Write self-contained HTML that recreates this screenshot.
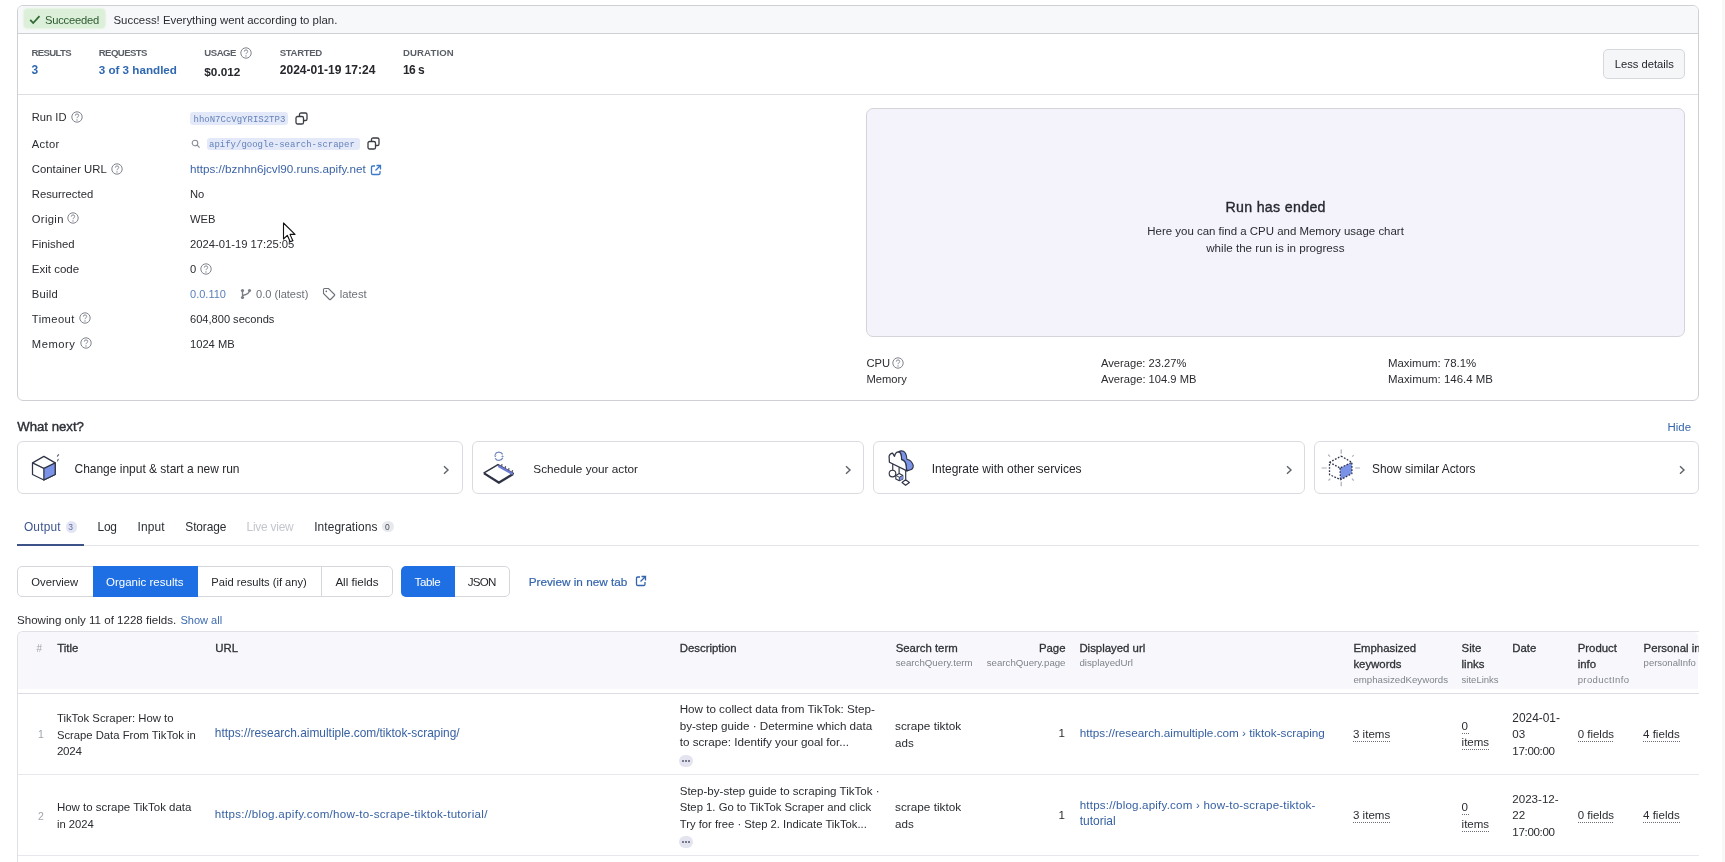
<!DOCTYPE html>
<html><head><meta charset="utf-8"><style>
html,body{margin:0;padding:0;background:#fff;width:1725px;height:862px;overflow:hidden;position:relative;font-family:'Liberation Sans', sans-serif;}
.t{position:absolute;white-space:pre;}
.r{position:absolute;}
</style></head><body><div id="w" style="position:absolute;left:0;top:0;width:1725px;height:862px;will-change:transform;">
<div class="r" style="left:1722px;top:0px;width:3px;height:862px;background:#f8f8f8;"></div>
<div class="r" style="left:17px;top:5px;width:1682px;height:396px;box-sizing:border-box;border:1px solid #cfd0d4;border-radius:6px;background:#fff;"></div>
<div class="r" style="left:18px;top:6px;width:1680px;height:27px;background:#f7f8f9;border-radius:5px 5px 0 0;"></div>
<div class="r" style="left:18px;top:33px;width:1680px;height:1px;background:#cfd0d4;"></div>
<div class="r" style="left:18px;top:94px;width:1680px;height:1px;background:#dcdee2;"></div>
<div class="r" style="left:24px;top:9px;width:81px;height:19px;background:#dcefd8;border-radius:4px;box-shadow:0 0 1.5px 0.5px #e4f3e1;"></div>
<svg class="r" style="left:29px;top:15px;" width="12" height="10" viewBox="0 0 12 10"><path d="M1.2 4.8 L4.2 8 L10.5 1.2" fill="none" stroke="#2f6a35" stroke-width="1.8"/></svg>
<div class="t" style="left:45.00px;top:11.50px;font-size:11.20px;line-height:16px;color:#2d5a33;letter-spacing:-0.227px;">Succeeded</div>
<div class="t" style="left:113.50px;top:11.50px;font-size:11.42px;line-height:16px;color:#2a2c31;">Success! Everything went according to plan.</div>
<div class="t" style="left:31.50px;top:46.20px;font-size:9.60px;line-height:13px;color:#5b5f67;font-weight:700;letter-spacing:-0.67px;">RESULTS</div>
<div class="t" style="left:98.70px;top:46.20px;font-size:9.60px;line-height:13px;color:#5b5f67;font-weight:700;letter-spacing:-0.564px;">REQUESTS</div>
<div class="t" style="left:204.30px;top:46.20px;font-size:9.60px;line-height:13px;color:#5b5f67;font-weight:700;letter-spacing:-0.488px;">USAGE</div>
<div class="t" style="left:279.80px;top:46.20px;font-size:9.60px;line-height:13px;color:#5b5f67;font-weight:700;letter-spacing:-0.374px;">STARTED</div>
<div class="t" style="left:403.00px;top:46.20px;font-size:9.60px;line-height:13px;color:#5b5f67;font-weight:700;letter-spacing:0.106px;">DURATION</div>
<svg class="r" style="left:238.7px;top:46.3px;" width="14" height="14" viewBox="0 0 14 14"><circle cx="7" cy="7" r="5.2" fill="none" stroke="#80848c" stroke-width="1"/><path d="M5.3 5.6 Q5.3 3.9 7 3.9 Q8.7 3.9 8.7 5.5 Q8.7 6.5 7.6 7 Q7 7.3 7 8.2" fill="none" stroke="#80848c" stroke-width="0.95"/><circle cx="7" cy="10" r="0.65" fill="#80848c"/></svg>
<div class="t" style="left:31.50px;top:61.70px;font-size:12.00px;line-height:17px;color:#2f67b0;font-weight:700;">3</div>
<div class="t" style="left:98.70px;top:61.70px;font-size:11.65px;line-height:16px;color:#2f67b0;font-weight:700;">3 of 3 handled</div>
<div class="t" style="left:204.30px;top:64.00px;font-size:11.77px;line-height:16px;color:#25272c;font-weight:700;">$0.012</div>
<div class="t" style="left:279.80px;top:62.00px;font-size:12.04px;line-height:17px;color:#25272c;font-weight:700;">2024-01-19 17:24</div>
<div class="t" style="left:403.00px;top:62.00px;font-size:12.00px;line-height:17px;color:#25272c;font-weight:700;letter-spacing:-0.589px;">16 s</div>
<div class="r" style="left:1603px;top:49px;width:82px;height:30px;box-sizing:border-box;border:1px solid #d6d8de;border-radius:5px;background:#f5f6f8;"></div>
<div class="t" style="left:1614.70px;top:55.80px;font-size:11.21px;line-height:16px;color:#25272c;">Less details</div>
<div class="t" style="left:31.80px;top:108.80px;font-size:11.15px;line-height:16px;color:#2a2c31;">Run ID</div>
<svg class="r" style="left:69.5px;top:109.5px;" width="14" height="14" viewBox="0 0 14 14"><circle cx="7" cy="7" r="5.2" fill="none" stroke="#80848c" stroke-width="1"/><path d="M5.3 5.6 Q5.3 3.9 7 3.9 Q8.7 3.9 8.7 5.5 Q8.7 6.5 7.6 7 Q7 7.3 7 8.2" fill="none" stroke="#80848c" stroke-width="0.95"/><circle cx="7" cy="10" r="0.65" fill="#80848c"/></svg>
<div class="t" style="left:31.80px;top:136.00px;font-size:11.20px;line-height:16px;color:#2a2c31;letter-spacing:0.312px;">Actor</div>
<div class="t" style="left:31.80px;top:161.00px;font-size:11.34px;line-height:16px;color:#2a2c31;">Container URL</div>
<svg class="r" style="left:109.5px;top:161.7px;" width="14" height="14" viewBox="0 0 14 14"><circle cx="7" cy="7" r="5.2" fill="none" stroke="#80848c" stroke-width="1"/><path d="M5.3 5.6 Q5.3 3.9 7 3.9 Q8.7 3.9 8.7 5.5 Q8.7 6.5 7.6 7 Q7 7.3 7 8.2" fill="none" stroke="#80848c" stroke-width="0.95"/><circle cx="7" cy="10" r="0.65" fill="#80848c"/></svg>
<div class="t" style="left:31.80px;top:185.70px;font-size:11.27px;line-height:16px;color:#2a2c31;">Resurrected</div>
<div class="t" style="left:31.80px;top:210.60px;font-size:11.20px;line-height:16px;color:#2a2c31;letter-spacing:0.354px;">Origin</div>
<svg class="r" style="left:66.3px;top:211.29999999999998px;" width="14" height="14" viewBox="0 0 14 14"><circle cx="7" cy="7" r="5.2" fill="none" stroke="#80848c" stroke-width="1"/><path d="M5.3 5.6 Q5.3 3.9 7 3.9 Q8.7 3.9 8.7 5.5 Q8.7 6.5 7.6 7 Q7 7.3 7 8.2" fill="none" stroke="#80848c" stroke-width="0.95"/><circle cx="7" cy="10" r="0.65" fill="#80848c"/></svg>
<div class="t" style="left:31.80px;top:235.60px;font-size:11.32px;line-height:16px;color:#2a2c31;">Finished</div>
<div class="t" style="left:31.80px;top:260.60px;font-size:11.52px;line-height:16px;color:#2a2c31;">Exit code</div>
<div class="t" style="left:31.80px;top:285.60px;font-size:11.20px;line-height:16px;color:#2a2c31;letter-spacing:0.239px;">Build</div>
<div class="t" style="left:31.80px;top:310.60px;font-size:11.20px;line-height:16px;color:#2a2c31;letter-spacing:0.422px;">Timeout</div>
<svg class="r" style="left:77.5px;top:311.3px;" width="14" height="14" viewBox="0 0 14 14"><circle cx="7" cy="7" r="5.2" fill="none" stroke="#80848c" stroke-width="1"/><path d="M5.3 5.6 Q5.3 3.9 7 3.9 Q8.7 3.9 8.7 5.5 Q8.7 6.5 7.6 7 Q7 7.3 7 8.2" fill="none" stroke="#80848c" stroke-width="0.95"/><circle cx="7" cy="10" r="0.65" fill="#80848c"/></svg>
<div class="t" style="left:31.80px;top:335.60px;font-size:11.20px;line-height:16px;color:#2a2c31;letter-spacing:0.525px;">Memory</div>
<svg class="r" style="left:78.5px;top:336.3px;" width="14" height="14" viewBox="0 0 14 14"><circle cx="7" cy="7" r="5.2" fill="none" stroke="#80848c" stroke-width="1"/><path d="M5.3 5.6 Q5.3 3.9 7 3.9 Q8.7 3.9 8.7 5.5 Q8.7 6.5 7.6 7 Q7 7.3 7 8.2" fill="none" stroke="#80848c" stroke-width="0.95"/><circle cx="7" cy="10" r="0.65" fill="#80848c"/></svg>
<div class="r" style="left:190px;top:112px;width:98px;height:13px;background:#e3e9f8;border-radius:3px;"></div>
<div class="t" style="left:193.50px;top:113.50px;font-size:9.00px;line-height:13px;color:#6482ba;font-family:'Liberation Mono', monospace;">hhoN7CcVgYRIS2TP3</div>
<svg class="r" style="left:294.5px;top:112px;" width="13" height="13" viewBox="0 0 13 13"><rect x="1" y="4.5" width="7.5" height="7.5" rx="1.6" fill="none" stroke="#3a3d44" stroke-width="1.3"/><path d="M4.5 4.2 V2.6 Q4.5 1 6.1 1 H10.4 Q12 1 12 2.6 V6.9 Q12 8.5 10.4 8.5 H8.8" fill="none" stroke="#3a3d44" stroke-width="1.3"/></svg>
<svg class="r" style="left:191px;top:139px;" width="10" height="10" viewBox="0 0 10 10"><circle cx="4" cy="4" r="2.8" fill="none" stroke="#8a8d94" stroke-width="1.1"/><path d="M6.2 6.2 L8.6 8.6" stroke="#8a8d94" stroke-width="1.2"/></svg>
<div class="r" style="left:207px;top:137.5px;width:153px;height:12px;background:#e3e9f8;border-radius:3px;"></div>
<div class="t" style="left:209.00px;top:138.50px;font-size:9.00px;line-height:13px;color:#6482ba;font-family:'Liberation Mono', monospace;">apify/google-search-scraper</div>
<svg class="r" style="left:366.5px;top:137px;" width="13" height="13" viewBox="0 0 13 13"><rect x="1" y="4.5" width="7.5" height="7.5" rx="1.6" fill="none" stroke="#3a3d44" stroke-width="1.3"/><path d="M4.5 4.2 V2.6 Q4.5 1 6.1 1 H10.4 Q12 1 12 2.6 V6.9 Q12 8.5 10.4 8.5 H8.8" fill="none" stroke="#3a3d44" stroke-width="1.3"/></svg>
<div class="t" style="left:190.00px;top:160.70px;font-size:11.70px;line-height:16px;color:#3d64a6;">https://bznhn6jcvl90.runs.apify.net</div>
<svg class="r" style="left:370px;top:163.5px;" width="12" height="12" viewBox="0 0 12 12"><path d="M5 2 H2.8 Q1.5 2 1.5 3.3 V9.2 Q1.5 10.5 2.8 10.5 H8.7 Q10 10.5 10 9.2 V7" fill="none" stroke="#3a78c9" stroke-width="1.3"/><path d="M6.5 1.5 H10.5 V5.5 M10.5 1.5 L5.5 6.5" fill="none" stroke="#3a78c9" stroke-width="1.3"/></svg>
<div class="t" style="left:190.00px;top:186.00px;font-size:11.20px;line-height:16px;color:#2a2c31;">No</div>
<div class="t" style="left:190.00px;top:210.50px;font-size:11.20px;line-height:16px;color:#2a2c31;">WEB</div>
<div class="t" style="left:190.00px;top:236.30px;font-size:11.24px;line-height:16px;color:#2a2c31;">2024-01-19 17:25:05</div>
<div class="t" style="left:190.00px;top:261.30px;font-size:11.20px;line-height:16px;color:#2a2c31;">0</div>
<svg class="r" style="left:198.5px;top:261.8px;" width="14" height="14" viewBox="0 0 14 14"><circle cx="7" cy="7" r="5.2" fill="none" stroke="#80848c" stroke-width="1"/><path d="M5.3 5.6 Q5.3 3.9 7 3.9 Q8.7 3.9 8.7 5.5 Q8.7 6.5 7.6 7 Q7 7.3 7 8.2" fill="none" stroke="#80848c" stroke-width="0.95"/><circle cx="7" cy="10" r="0.65" fill="#80848c"/></svg>
<div class="t" style="left:190.00px;top:287.30px;font-size:11.04px;line-height:15px;color:#5a7fb8;">0.0.110</div>
<svg class="r" style="left:240px;top:288px;" width="12" height="12" viewBox="0 0 12 12"><circle cx="2.5" cy="2.5" r="1.6" fill="#7a7e86"/><circle cx="2.5" cy="9.5" r="1.6" fill="#7a7e86"/><circle cx="9.5" cy="2.5" r="1.6" fill="#7a7e86"/><path d="M2.5 2.5 V9.5 M9.5 2.5 Q9.5 6 2.5 7.5" fill="none" stroke="#7a7e86" stroke-width="1.3"/></svg>
<div class="t" style="left:256.00px;top:286.30px;font-size:11.09px;line-height:16px;color:#6c7078;">0.0 (latest)</div>
<svg class="r" style="left:322px;top:287px;" width="14" height="14" viewBox="0 0 14 14"><path d="M1.5 2.6 Q1.5 1.5 2.6 1.5 H6.5 L12.5 7.5 Q13 8 12.5 8.5 L8.5 12.5 Q8 13 7.5 12.5 L1.5 6.5 Z" fill="none" stroke="#6c7078" stroke-width="1.1"/><circle cx="4.3" cy="4.3" r="0.9" fill="#6c7078"/></svg>
<div class="t" style="left:339.70px;top:286.30px;font-size:11.30px;line-height:16px;color:#6c7078;">latest</div>
<div class="t" style="left:190.00px;top:311.30px;font-size:11.08px;line-height:16px;color:#2a2c31;">604,800 seconds</div>
<div class="t" style="left:190.00px;top:336.30px;font-size:11.17px;line-height:16px;color:#2a2c31;">1024 MB</div>
<svg class="r" style="left:282px;top:222px;" width="14" height="22" viewBox="0 0 14 22"><path d="M1.5 1 V17 L5.3 13.3 L8.2 19.8 L10.8 18.7 L8 12.4 L13 12.4 Z" fill="#fff" stroke="#111" stroke-width="1.1" stroke-linejoin="round"/></svg>
<div class="r" style="left:866px;top:108px;width:819px;height:229px;box-sizing:border-box;border:1px solid #d4d4d9;border-radius:7px;background:#f4f3fc;"></div>
<div class="t" style="left:1225.40px;top:197.00px;font-size:14.20px;line-height:20px;color:#26292f;letter-spacing:0.321px;-webkit-text-stroke:0.35px #26292f;">Run has ended</div>
<div class="t" style="left:1147.30px;top:222.50px;font-size:11.46px;line-height:16px;color:#2a2c31;">Here you can find a CPU and Memory usage chart</div>
<div class="t" style="left:1206.20px;top:239.50px;font-size:11.64px;line-height:16px;color:#2a2c31;">while the run is in progress</div>
<div class="t" style="left:866.50px;top:355.20px;font-size:11.20px;line-height:16px;color:#2a2c31;">CPU</div>
<svg class="r" style="left:890.5px;top:355.5px;" width="14" height="14" viewBox="0 0 14 14"><circle cx="7" cy="7" r="5.2" fill="none" stroke="#80848c" stroke-width="1"/><path d="M5.3 5.6 Q5.3 3.9 7 3.9 Q8.7 3.9 8.7 5.5 Q8.7 6.5 7.6 7 Q7 7.3 7 8.2" fill="none" stroke="#80848c" stroke-width="0.95"/><circle cx="7" cy="10" r="0.65" fill="#80848c"/></svg>
<div class="t" style="left:866.50px;top:371.20px;font-size:11.20px;line-height:16px;color:#2a2c31;">Memory</div>
<div class="t" style="left:1101.00px;top:355.20px;font-size:11.16px;line-height:16px;color:#2a2c31;">Average: 23.27%</div>
<div class="t" style="left:1101.00px;top:371.20px;font-size:11.18px;line-height:16px;color:#2a2c31;">Average: 104.9 MB</div>
<div class="t" style="left:1388.00px;top:355.20px;font-size:11.43px;line-height:16px;color:#2a2c31;">Maximum: 78.1%</div>
<div class="t" style="left:1388.00px;top:371.20px;font-size:11.45px;line-height:16px;color:#2a2c31;">Maximum: 146.4 MB</div>
<div class="t" style="left:17.20px;top:418.00px;font-size:13.19px;line-height:18px;color:#2c2f35;-webkit-text-stroke:0.4px #2c2f35;">What next?</div>
<div class="t" style="left:1667.50px;top:418.80px;font-size:11.43px;line-height:16px;color:#3465ad;">Hide</div>
<div class="r" style="left:17px;top:441px;width:446px;height:53px;box-sizing:border-box;border:1px solid #d9dbe1;border-radius:6px;background:#fff;"></div>
<div class="r" style="left:472px;top:441px;width:392px;height:53px;box-sizing:border-box;border:1px solid #d9dbe1;border-radius:6px;background:#fff;"></div>
<div class="r" style="left:873px;top:441px;width:432px;height:53px;box-sizing:border-box;border:1px solid #d9dbe1;border-radius:6px;background:#fff;"></div>
<div class="r" style="left:1314px;top:441px;width:385px;height:53px;box-sizing:border-box;border:1px solid #d9dbe1;border-radius:6px;background:#fff;"></div>
<svg class="r" style="left:442px;top:465px;" width="8" height="10" viewBox="0 0 8 10"><path d="M2 1.2 L6 5 L2 8.8" fill="none" stroke="#5d6168" stroke-width="1.4"/></svg>
<svg class="r" style="left:844px;top:465px;" width="8" height="10" viewBox="0 0 8 10"><path d="M2 1.2 L6 5 L2 8.8" fill="none" stroke="#5d6168" stroke-width="1.4"/></svg>
<svg class="r" style="left:1284.5px;top:465px;" width="8" height="10" viewBox="0 0 8 10"><path d="M2 1.2 L6 5 L2 8.8" fill="none" stroke="#5d6168" stroke-width="1.4"/></svg>
<svg class="r" style="left:1677.5px;top:465px;" width="8" height="10" viewBox="0 0 8 10"><path d="M2 1.2 L6 5 L2 8.8" fill="none" stroke="#5d6168" stroke-width="1.4"/></svg>
<div class="t" style="left:74.50px;top:461.00px;font-size:11.97px;line-height:17px;color:#25272c;">Change input &amp; start a new run</div>
<div class="t" style="left:533.30px;top:460.80px;font-size:11.77px;line-height:16px;color:#25272c;">Schedule your actor</div>
<div class="t" style="left:931.70px;top:461.00px;font-size:11.99px;line-height:17px;color:#25272c;">Integrate with other services</div>
<div class="t" style="left:1372.00px;top:461.00px;font-size:11.85px;line-height:17px;color:#25272c;">Show similar Actors</div>
<svg class="r" style="left:26px;top:448px;" width="40" height="40" viewBox="0 0 40 40"><path d="M17.87 8.35 L29.2 14.85 L29.2 26.45 L17.87 32 L6.5 26.45 L6.5 14.85 Z" fill="#fff" stroke="#2f3346" stroke-width="1.25" stroke-linejoin="round"/><path d="M17.87 20.4 L29.2 14.85 L29.2 26.45 L17.87 32 Z" fill="#7b93e6" stroke="#2f3346" stroke-width="1.25" stroke-linejoin="round"/><path d="M6.5 14.85 L17.87 20.4" fill="none" stroke="#2f3346" stroke-width="1.25"/><path d="M32.6 6.6 L31.4 8.2 M32.2 11.3 L31.6 12.9" stroke="#5a5f70" stroke-width="1.1" stroke-linecap="round"/></svg>
<svg class="r" style="left:478px;top:446px;" width="40" height="40" viewBox="0 0 40 40"><path d="M6 26.9 L20 18.6 L35.3 27.4 L20.9 36.2 Z" fill="#fff" stroke="#2f3346" stroke-width="1.5" stroke-linejoin="round"/><path d="M6 27.6 L20.9 37.1 L35.3 28.3" fill="none" stroke="#2f3346" stroke-width="1.7" stroke-linejoin="round"/><path d="M20.3 19.9 L34.8 28" stroke="#6d7bd6" stroke-width="2.3"/><path d="M23.5 19.6 L24.2 18.4 M27 21.6 L27.7 20.4 M30.5 23.6 L31.2 22.4 M34 25.6 L34.7 24.4" stroke="#2f3346" stroke-width="1.2"/><path d="M17 8.7 A4.2 4.2 0 0 1 24.6 8.4" fill="none" stroke="#7386c0" stroke-width="1.3"/><path d="M24.8 11.8 A4.2 4.2 0 0 1 17.2 12.2" fill="none" stroke="#7386c0" stroke-width="1.3"/><path d="M15.8 9.6 L17.4 11.3 L18.6 9.4 Z M26 10.8 L24.4 9.2 L23.2 11.1 Z" fill="#6a7fc0"/></svg>
<svg class="r" style="left:882px;top:446px;" width="40" height="44" viewBox="0 0 40 44"><path d="M16.5 5.8 Q19 4.2 21.5 5.3 Q24.5 7 24.9 13.3 Q29.5 14.3 31.2 19.2 Q31.6 22.8 28.5 23.8 L24.9 24.9 Q24.3 22.5 24.1 19.6 Q23.5 14.5 19.6 13.6 Q19.5 6 16.5 5.8 Z" fill="#7b93e6" stroke="#2f3346" stroke-width="1.1" stroke-linejoin="round"/><path d="M7.4 16.2 L7.1 10.1 Q8 7.3 10.6 7.2 L12.5 10.3 Q13.5 5.8 16.5 5.8 Q19.5 6 19.6 13.6 Q23.5 14.5 24.1 19.6 Q24.3 22.5 24.9 24.9 Z" fill="#fff" stroke="#2f3346" stroke-width="1.25" stroke-linejoin="round"/><path d="M10.75 18 V24.2 M17.1 21.6 V27.6 M23.7 24.6 V33.8" stroke="#2f3346" stroke-width="1.15"/><circle cx="10.5" cy="27.5" r="3.3" fill="#fff" stroke="#2f3346" stroke-width="1.15"/><path d="M13.8 29.4 L17.3 27.6 L20.8 29.4 L20.8 32.9 L17.3 34.7 L13.8 32.9 Z" fill="#fff" stroke="#2f3346" stroke-width="1.1" stroke-linejoin="round"/><path d="M17.3 31.2 L20.8 29.4 L20.8 32.9 L17.3 34.7 Z" fill="#7b93e6"/><path d="M13.8 29.4 L17.3 31.2 L20.8 29.4 M17.3 31.2 V34.7" fill="none" stroke="#2f3346" stroke-width="0.9"/><path d="M20 36.5 L23.6 33.8 L27.4 36.5 L23.6 39.3 Z" fill="#fff" stroke="#2f3346" stroke-width="1.15" stroke-linejoin="round"/></svg>
<svg class="r" style="left:1318px;top:446px;" width="44" height="44" viewBox="0 0 44 44"><path d="M23.2 3.6 V7.7 M23.2 35.7 V40.3 M3.6 22 H8.7 M37.3 22 H41.9 M10.2 8.7 L12 10.7 M35.7 9.2 L34.2 10.7 M10.5 34.5 L12.3 32.7 M34 32.7 L35.7 34.7" stroke="#a9adb8" stroke-width="1.2"/><path d="M22 22 L33.9 16.3 L33.9 27.6 L22.5 33.7 Z" fill="#7b93e6"/><path d="M23.2 10.2 L33.9 16.3 L33.9 27.6 L22.5 33.7 L11.5 28.6 L11.5 16.3 Z M11.5 16.3 L22 22 L33.9 16.3 M22 22 L22.5 33.7" fill="none" stroke="#2f3346" stroke-width="1.3" stroke-dasharray="1.7 1.5" stroke-linejoin="round"/></svg>
<div class="t" style="left:23.90px;top:519.00px;font-size:11.90px;line-height:17px;color:#3d5590;letter-spacing:0.213px;">Output</div>
<div class="t" style="left:97.50px;top:519.00px;font-size:11.90px;line-height:17px;color:#2a2d33;letter-spacing:-0.219px;">Log</div>
<div class="t" style="left:137.50px;top:519.00px;font-size:11.90px;line-height:17px;color:#2a2d33;letter-spacing:0.166px;">Input</div>
<div class="t" style="left:185.30px;top:519.00px;font-size:11.90px;line-height:17px;color:#2a2d33;letter-spacing:-0.097px;">Storage</div>
<div class="t" style="left:246.50px;top:519.00px;font-size:11.90px;line-height:17px;color:#c3c6cc;letter-spacing:-0.216px;">Live view</div>
<div class="t" style="left:314.20px;top:519.00px;font-size:11.90px;line-height:17px;color:#2a2d33;letter-spacing:0.093px;">Integrations</div>
<div class="r" style="left:65.5px;top:521px;width:11.5px;height:11.5px;background:#e3e5f5;border-radius:50%;"></div>
<div class="t" style="left:68.30px;top:521.00px;font-size:8.50px;line-height:12px;color:#5c6aa0;">3</div>
<div class="r" style="left:382px;top:520.5px;width:11.5px;height:11.5px;background:#e8e9ef;border-radius:50%;"></div>
<div class="t" style="left:385.00px;top:520.50px;font-size:8.50px;line-height:12px;color:#4a4d55;">0</div>
<div class="r" style="left:17px;top:545px;width:1682px;height:1px;background:#e4e6ea;"></div>
<div class="r" style="left:17px;top:544px;width:67px;height:2px;background:#3c5289;"></div>
<div class="r" style="left:17px;top:566px;width:376px;height:31px;box-sizing:border-box;border:1px solid #d5d7dd;border-radius:5px;background:#fff;"></div>
<div class="r" style="left:92.5px;top:566px;width:105px;height:31px;background:#1e6fe4;border:0;"></div>
<div class="r" style="left:321px;top:567px;width:1px;height:29px;background:#d5d7dd;"></div>
<div class="t" style="left:31.30px;top:574.00px;font-size:11.28px;line-height:16px;color:#25272c;">Overview</div>
<div class="t" style="left:106.00px;top:574.00px;font-size:11.52px;line-height:16px;color:#fff;">Organic results</div>
<div class="t" style="left:211.30px;top:574.00px;font-size:11.16px;line-height:16px;color:#25272c;">Paid results (if any)</div>
<div class="t" style="left:335.40px;top:574.00px;font-size:11.60px;line-height:16px;color:#25272c;">All fields</div>
<div class="r" style="left:400.5px;top:566px;width:109px;height:31px;box-sizing:border-box;border:1px solid #d5d7dd;border-radius:5px;background:#fff;overflow:hidden;"></div>
<div class="r" style="left:400.5px;top:566px;width:54px;height:31px;background:#1e6fe4;border-radius:5px 0 0 5px;"></div>
<div class="t" style="left:414.50px;top:574.00px;font-size:11.60px;line-height:16px;color:#fff;letter-spacing:-0.406px;">Table</div>
<div class="t" style="left:467.80px;top:574.00px;font-size:11.60px;line-height:16px;color:#25272c;letter-spacing:-0.784px;">JSON</div>
<div class="t" style="left:528.70px;top:574.00px;font-size:11.76px;line-height:16px;color:#3465ad;-webkit-text-stroke:0.2px #3465ad;">Preview in new tab</div>
<svg class="r" style="left:635px;top:575px;" width="12" height="12" viewBox="0 0 12 12"><path d="M5 2 H2.8 Q1.5 2 1.5 3.3 V9.2 Q1.5 10.5 2.8 10.5 H8.7 Q10 10.5 10 9.2 V7" fill="none" stroke="#3465ad" stroke-width="1.3"/><path d="M6.5 1.5 H10.5 V5.5 M10.5 1.5 L5.5 6.5" fill="none" stroke="#3465ad" stroke-width="1.3"/></svg>
<div class="t" style="left:17.00px;top:611.80px;font-size:11.57px;line-height:16px;color:#2a2c31;">Showing only 11 of 1228 fields.</div>
<div class="t" style="left:180.40px;top:612.80px;font-size:11.06px;line-height:15px;color:#3d6bb0;">Show all</div>
<div class="r" style="left:17px;top:631px;width:1682px;height:240px;box-sizing:border-box;border:1px solid #dfe1e6;border-right:0;border-radius:6px 0 0 0;background:#fff;"></div>
<div class="r" style="left:18px;top:632px;width:1680px;height:57px;background:#f8f8fc;border-radius:5px 5px 0 0;"></div>
<div class="r" style="left:18px;top:693px;width:1681px;height:1px;background:#dcdde1;"></div>
<div class="r" style="left:18px;top:774px;width:1681px;height:1px;background:#e6e8ec;"></div>
<div class="r" style="left:18px;top:855px;width:1681px;height:1px;background:#e6e8ec;"></div>
<div class="t" style="left:36.40px;top:641.50px;font-size:10.00px;line-height:14px;color:#a0a4ab;">#</div>
<div class="t" style="left:57.30px;top:640.00px;font-size:11.40px;line-height:16px;color:#2e3136;-webkit-text-stroke:0.3px #2e3136;">Title</div>
<div class="t" style="left:215.20px;top:640.00px;font-size:11.40px;line-height:16px;color:#2e3136;-webkit-text-stroke:0.3px #2e3136;">URL</div>
<div class="t" style="left:679.70px;top:640.00px;font-size:11.40px;line-height:16px;color:#2e3136;-webkit-text-stroke:0.3px #2e3136;">Description</div>
<div class="t" style="left:895.70px;top:640.00px;font-size:11.40px;line-height:16px;color:#2e3136;-webkit-text-stroke:0.3px #2e3136;">Search term</div>
<div class="t" style="left:895.70px;top:656.00px;font-size:9.71px;line-height:14px;color:#7f838b;">searchQuery.term</div>
<div class="t" style="right:659.50px;top:640.00px;font-size:11.40px;line-height:16px;color:#2e3136;-webkit-text-stroke:0.3px #2e3136;">Page</div>
<div class="t" style="right:659.50px;top:656.00px;font-size:9.67px;line-height:14px;color:#7f838b;">searchQuery.page</div>
<div class="t" style="left:1079.40px;top:640.00px;font-size:11.40px;line-height:16px;color:#2e3136;-webkit-text-stroke:0.3px #2e3136;">Displayed url</div>
<div class="t" style="left:1079.40px;top:656.00px;font-size:9.74px;line-height:14px;color:#7f838b;">displayedUrl</div>
<div class="t" style="left:1353.40px;top:640.00px;font-size:11.40px;line-height:16px;color:#2e3136;-webkit-text-stroke:0.3px #2e3136;">Emphasized</div>
<div class="t" style="left:1353.40px;top:656.00px;font-size:11.40px;line-height:16px;color:#2e3136;-webkit-text-stroke:0.3px #2e3136;">keywords</div>
<div class="t" style="left:1353.40px;top:672.50px;font-size:9.69px;line-height:14px;color:#7f838b;">emphasizedKeywords</div>
<div class="t" style="left:1461.60px;top:640.00px;font-size:11.40px;line-height:16px;color:#2e3136;-webkit-text-stroke:0.3px #2e3136;">Site</div>
<div class="t" style="left:1461.60px;top:656.00px;font-size:11.40px;line-height:16px;color:#2e3136;-webkit-text-stroke:0.3px #2e3136;">links</div>
<div class="t" style="left:1461.60px;top:672.50px;font-size:9.51px;line-height:13px;color:#7f838b;">siteLinks</div>
<div class="t" style="left:1512.30px;top:640.00px;font-size:11.40px;line-height:16px;color:#2e3136;-webkit-text-stroke:0.3px #2e3136;">Date</div>
<div class="t" style="left:1577.70px;top:640.00px;font-size:11.40px;line-height:16px;color:#2e3136;-webkit-text-stroke:0.3px #2e3136;">Product</div>
<div class="t" style="left:1577.70px;top:656.00px;font-size:11.40px;line-height:16px;color:#2e3136;-webkit-text-stroke:0.3px #2e3136;">info</div>
<div class="t" style="left:1577.70px;top:672.50px;font-size:9.50px;line-height:13px;color:#7f838b;letter-spacing:0.388px;">productInfo</div>
<div class="r" style="left:1643px;top:636px;width:56px;height:40px;overflow:hidden;">
<div class="t" style="left:0.60px;top:4.00px;font-size:11.40px;line-height:16px;color:#2e3136;-webkit-text-stroke:0.3px #2e3136;">Personal info</div>
<div class="t" style="left:0.60px;top:20.00px;font-size:9.50px;line-height:13px;color:#7f838b;">personalInfo</div>
</div>
<div class="t" style="left:38.00px;top:727.30px;font-size:10.50px;line-height:15px;color:#a0a4ab;">1</div>
<div class="t" style="left:38.00px;top:808.70px;font-size:10.50px;line-height:15px;color:#a0a4ab;">2</div>
<div class="t" style="left:56.90px;top:710.30px;font-size:11.33px;line-height:16px;color:#2a2c31;">TikTok Scraper: How to</div>
<div class="t" style="left:56.90px;top:726.50px;font-size:11.27px;line-height:16px;color:#2a2c31;">Scrape Data From TikTok in</div>
<div class="t" style="left:56.90px;top:742.80px;font-size:11.60px;line-height:16px;color:#2a2c31;letter-spacing:-0.227px;">2024</div>
<div class="t" style="left:214.80px;top:724.90px;font-size:11.92px;line-height:17px;color:#3761a3;">https://research.aimultiple.com/tiktok-scraping/</div>
<div class="t" style="left:679.70px;top:701.00px;font-size:11.64px;line-height:16px;color:#2a2c31;">How to collect data from TikTok: Step-</div>
<div class="t" style="left:679.70px;top:717.50px;font-size:11.63px;line-height:16px;color:#2a2c31;">by-step guide · Determine which data</div>
<div class="t" style="left:679.70px;top:734.00px;font-size:11.68px;line-height:16px;color:#2a2c31;">to scrape: Identify your goal for...</div>
<div class="r" style="left:679px;top:755px;width:14px;height:12px;background:#e4e4f0;border-radius:6px;"></div>
<div class="r" style="left:682px;top:760px;width:2px;height:2px;background:#55586a;border-radius:1px;"></div>
<div class="r" style="left:685px;top:760px;width:2px;height:2px;background:#55586a;border-radius:1px;"></div>
<div class="r" style="left:688px;top:760px;width:2px;height:2px;background:#55586a;border-radius:1px;"></div>
<div class="t" style="left:895.10px;top:717.90px;font-size:11.76px;line-height:16px;color:#2a2c31;">scrape tiktok</div>
<div class="t" style="left:895.10px;top:734.70px;font-size:11.60px;line-height:16px;color:#2a2c31;">ads</div>
<div class="t" style="right:660.00px;top:725.30px;font-size:11.60px;line-height:16px;color:#2a2c31;">1</div>
<div class="t" style="left:1079.70px;top:725.30px;font-size:11.74px;line-height:16px;color:#3761a3;">https://research.aimultiple.com › tiktok-scraping</div>
<div class="t" style="left:1353.00px;top:725.50px;font-size:11.54px;line-height:16px;color:#2a2c31;">3 items</div>
<div class="r" style="left:1353px;top:740.5px;width:37px;height:1px;background-image:linear-gradient(90deg,#6a6e76 50%,transparent 50%);background-size:2px 1px;"></div>
<div class="t" style="left:1461.60px;top:717.50px;font-size:11.60px;line-height:16px;color:#2a2c31;">0</div>
<div class="r" style="left:1461.6px;top:732.5px;width:7px;height:1px;background-image:linear-gradient(90deg,#6a6e76 50%,transparent 50%);background-size:2px 1px;"></div>
<div class="t" style="left:1461.60px;top:734.40px;font-size:11.51px;line-height:16px;color:#2a2c31;">items</div>
<div class="r" style="left:1461.6px;top:749.4px;width:28px;height:1px;background-image:linear-gradient(90deg,#6a6e76 50%,transparent 50%);background-size:2px 1px;"></div>
<div class="t" style="left:1512.30px;top:709.90px;font-size:11.92px;line-height:17px;color:#2a2c31;">2024-01-</div>
<div class="t" style="left:1512.30px;top:726.00px;font-size:11.60px;line-height:16px;color:#2a2c31;">03</div>
<div class="t" style="left:1512.30px;top:742.70px;font-size:11.60px;line-height:16px;color:#2a2c31;letter-spacing:-0.344px;">17:00:00</div>
<div class="t" style="left:1577.70px;top:725.50px;font-size:11.46px;line-height:16px;color:#2a2c31;">0 fields</div>
<div class="r" style="left:1577.7px;top:740.5px;width:36px;height:1px;background-image:linear-gradient(90deg,#6a6e76 50%,transparent 50%);background-size:2px 1px;"></div>
<div class="t" style="left:1643.00px;top:725.50px;font-size:11.58px;line-height:16px;color:#2a2c31;">4 fields</div>
<div class="r" style="left:1643px;top:740.5px;width:37px;height:1px;background-image:linear-gradient(90deg,#6a6e76 50%,transparent 50%);background-size:2px 1px;"></div>
<div class="t" style="left:56.90px;top:799.30px;font-size:11.48px;line-height:16px;color:#2a2c31;">How to scrape TikTok data</div>
<div class="t" style="left:56.90px;top:815.60px;font-size:11.25px;line-height:16px;color:#2a2c31;">in 2024</div>
<div class="t" style="left:214.80px;top:806.00px;font-size:11.60px;line-height:16px;color:#3761a3;letter-spacing:0.277px;">https://blog.apify.com/how-to-scrape-tiktok-tutorial/</div>
<div class="t" style="left:679.70px;top:783.20px;font-size:11.57px;line-height:16px;color:#2a2c31;">Step-by-step guide to scraping TikTok ·</div>
<div class="t" style="left:679.70px;top:799.00px;font-size:11.31px;line-height:16px;color:#2a2c31;">Step 1. Go to TikTok Scraper and click</div>
<div class="t" style="left:679.70px;top:815.70px;font-size:11.25px;line-height:16px;color:#2a2c31;">Try for free · Step 2. Indicate TikTok...</div>
<div class="r" style="left:679px;top:836px;width:14px;height:12px;background:#e4e4f0;border-radius:6px;"></div>
<div class="r" style="left:682px;top:841px;width:2px;height:2px;background:#55586a;border-radius:1px;"></div>
<div class="r" style="left:685px;top:841px;width:2px;height:2px;background:#55586a;border-radius:1px;"></div>
<div class="r" style="left:688px;top:841px;width:2px;height:2px;background:#55586a;border-radius:1px;"></div>
<div class="t" style="left:895.10px;top:798.70px;font-size:11.76px;line-height:16px;color:#2a2c31;">scrape tiktok</div>
<div class="t" style="left:895.10px;top:815.50px;font-size:11.60px;line-height:16px;color:#2a2c31;">ads</div>
<div class="t" style="right:660.00px;top:806.70px;font-size:11.60px;line-height:16px;color:#2a2c31;">1</div>
<div class="t" style="left:1079.70px;top:796.80px;font-size:11.60px;line-height:16px;color:#3761a3;letter-spacing:0.188px;">https://blog.apify.com › how-to-scrape-tiktok-</div>
<div class="t" style="left:1079.70px;top:813.30px;font-size:11.99px;line-height:17px;color:#3761a3;">tutorial</div>
<div class="t" style="left:1353.00px;top:807.40px;font-size:11.54px;line-height:16px;color:#2a2c31;">3 items</div>
<div class="r" style="left:1353px;top:822.4px;width:37px;height:1px;background-image:linear-gradient(90deg,#6a6e76 50%,transparent 50%);background-size:2px 1px;"></div>
<div class="t" style="left:1461.60px;top:799.00px;font-size:11.60px;line-height:16px;color:#2a2c31;">0</div>
<div class="r" style="left:1461.6px;top:814px;width:7px;height:1px;background-image:linear-gradient(90deg,#6a6e76 50%,transparent 50%);background-size:2px 1px;"></div>
<div class="t" style="left:1461.60px;top:815.80px;font-size:11.51px;line-height:16px;color:#2a2c31;">items</div>
<div class="r" style="left:1461.6px;top:830.8px;width:28px;height:1px;background-image:linear-gradient(90deg,#6a6e76 50%,transparent 50%);background-size:2px 1px;"></div>
<div class="t" style="left:1512.30px;top:791.00px;font-size:11.59px;line-height:16px;color:#2a2c31;">2023-12-</div>
<div class="t" style="left:1512.30px;top:807.20px;font-size:11.60px;line-height:16px;color:#2a2c31;">22</div>
<div class="t" style="left:1512.30px;top:823.50px;font-size:11.60px;line-height:16px;color:#2a2c31;letter-spacing:-0.344px;">17:00:00</div>
<div class="t" style="left:1577.70px;top:807.40px;font-size:11.46px;line-height:16px;color:#2a2c31;">0 fields</div>
<div class="r" style="left:1577.7px;top:822.4px;width:36px;height:1px;background-image:linear-gradient(90deg,#6a6e76 50%,transparent 50%);background-size:2px 1px;"></div>
<div class="t" style="left:1643.00px;top:807.40px;font-size:11.58px;line-height:16px;color:#2a2c31;">4 fields</div>
<div class="r" style="left:1643px;top:822.4px;width:37px;height:1px;background-image:linear-gradient(90deg,#6a6e76 50%,transparent 50%);background-size:2px 1px;"></div>
</div></body></html>
